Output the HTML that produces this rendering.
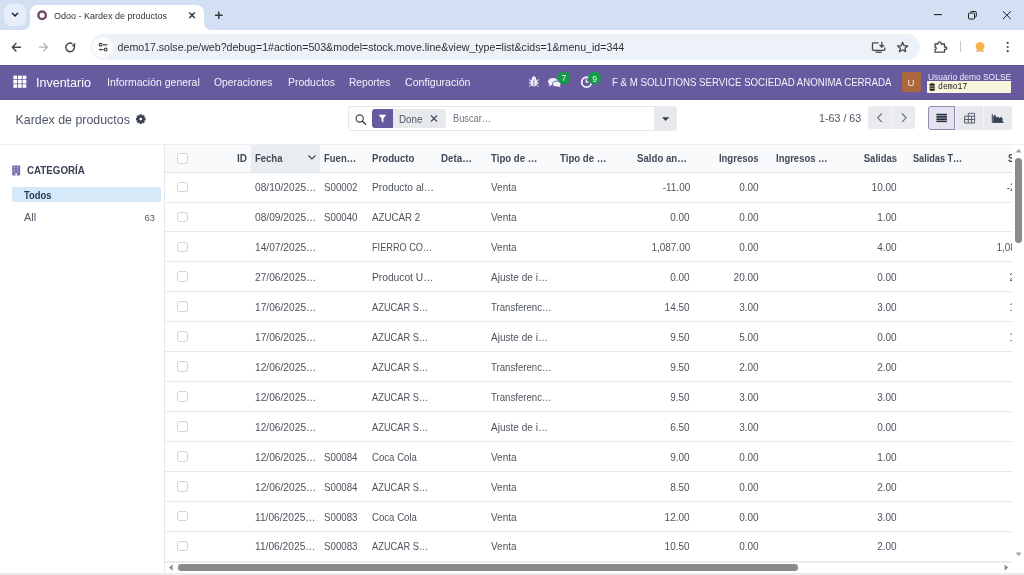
<!DOCTYPE html><html><head><meta charset="utf-8"><style>
*{box-sizing:border-box;margin:0;padding:0}
html,body{width:1024px;height:575px;overflow:hidden;background:#fff;font-family:"Liberation Sans",sans-serif;position:relative}
.a{position:absolute;white-space:nowrap}
#root{position:absolute;left:0;top:0;width:1024px;height:575px;overflow:hidden;will-change:transform}
.t{line-height:1}
svg{position:absolute;overflow:visible}
#tabstrip{left:0;top:0;width:1024px;height:30px;background:#d3e0f3}
#tabdd{left:4px;top:4px;width:22px;height:22px;border-radius:7px;background:#e7edf9}
#tab{left:30px;top:5px;width:174px;height:25px;background:#fff;border-radius:8px 8px 0 0}
#toolbar{left:0;top:29.6px;width:1024px;height:35.4px;background:#fff}
#omni{left:91px;top:34.3px;width:829px;height:25.4px;border-radius:12.7px;background:#edf1f8}
#siteinfo{left:92px;top:37px;width:20.5px;height:20.5px;border-radius:10.25px;background:#fbfcfe}
#navbar{left:0;top:65px;width:1024px;height:34.5px;background:#675a9f}
#cp{left:0;top:99.5px;width:1024px;height:45px;background:#fff;border-bottom:1px solid #eceef1}
#side{left:0;top:144px;width:165px;height:431px;background:#fff;border-right:1px solid #e4e6ea}
#list{left:165px;top:144px;width:847px;height:418px;overflow:hidden;background:#fff}
.nav{color:#fff;font-size:10.3px}
.hd{font-size:9.5px;font-weight:700;color:#424a57}
.cell{font-size:10px;color:#4e545d}
.chk{width:10.5px;height:10.5px;border:1px solid #d0d3d8;border-radius:2.5px;background:#fff}
</style></head><body><div id="root">
<div id="tabstrip" class="a"></div>
<div id="tabdd" class="a"></div>
<svg style="left:0;top:0" width="1" height="1"><path d="M12.3 13.2 L15 15.9 L17.7 13.2" fill="none" stroke="#1f2a44" stroke-width="1.5" stroke-linecap="round" stroke-linejoin="round"/></svg>
<div id="tab" class="a"></div>
<svg style="left:0;top:0" width="1" height="1"><path d="M22 30 Q30 30 30 22 L30 30 Z" fill="#fff"/><path d="M204 22 Q204 30 212 30 L204 30 Z" fill="#fff"/></svg>
<svg style="left:0;top:0" width="1" height="1"><circle cx="42.1" cy="15.3" r="3.75" fill="none" stroke="#6e4a66" stroke-width="2.4"/></svg>
<div class="a t " style="left:54.00px;top:11.16px;font-size:9.5px;color:#303030;transform:scaleX(0.946);transform-origin:left center">Odoo - Kardex de productos</div>
<svg style="left:0;top:0" width="1" height="1"><path d="M189.3 12.5 L194.8 18 M194.8 12.5 L189.3 18" stroke="#333" stroke-width="1.4"/></svg>
<svg style="left:0;top:0" width="1" height="1"><path d="M218.8 11.5 V19 M215 15.25 H222.6" stroke="#333" stroke-width="1.4"/></svg>
<svg style="left:0;top:0" width="1" height="1"><path d="M934 14.6 H942" stroke="#222" stroke-width="1.1"/><rect x="968.5" y="13" width="6" height="6" rx="1" fill="none" stroke="#222" stroke-width="1"/><path d="M970.5 13 V12.5 Q970.5 11.5 971.5 11.5 H975 Q976.3 11.5 976.3 12.8 V16 Q976.3 17 975.3 17 H974.5" fill="none" stroke="#222" stroke-width="1"/><path d="M1003 11.3 L1010.8 19 M1010.8 11.3 L1003 19" stroke="#222" stroke-width="1"/></svg>
<div id="toolbar" class="a"></div>
<svg style="left:0;top:0" width="1" height="1"><path d="M12.3 47.2 H21 M16.4 43 L12.3 47.2 L16.4 51.4" fill="none" stroke="#474747" stroke-width="1.4" stroke-linejoin="round"/><path d="M38.8 47.2 H47.4 M43.3 43 L47.4 47.2 L43.3 51.4" fill="none" stroke="#b4b4b4" stroke-width="1.3" stroke-linejoin="round"/><path d="M74.2 46 A4.3 4.3 0 1 1 72.5 43.8" fill="none" stroke="#474747" stroke-width="1.5"/><path d="M75.2 42.6 V46.3 H71.5 Z" fill="#474747"/></svg>
<div id="omni" class="a"></div>
<div id="siteinfo" class="a"></div>
<svg style="left:0;top:0" width="1" height="1"><circle cx="100.6" cy="44.8" r="1.4" fill="none" stroke="#474747" stroke-width="1.2"/><path d="M103 44.8 H107.3" stroke="#474747" stroke-width="1.3"/><circle cx="105.6" cy="49.6" r="1.4" fill="none" stroke="#474747" stroke-width="1.2"/><path d="M99 49.6 H103.3" stroke="#474747" stroke-width="1.3"/></svg>
<div class="a t " style="left:117.60px;top:42.33px;font-size:10.6px;color:#303134;letter-spacing:0px">demo17.solse.pe/web?debug=1#action=503&amp;model=stock.move.line&amp;view_type=list&amp;cids=1&amp;menu_id=344</div>
<svg style="left:0;top:0" width="1" height="1"><path d="M878.5 42.8 H873.3 Q872.5 42.8 872.5 43.6 V49.6 Q872.5 50.4 873.3 50.4 H884 Q884.8 50.4 884.8 49.6 V47.5" fill="none" stroke="#474747" stroke-width="1.3"/><path d="M875.5 52.2 H881.8" stroke="#474747" stroke-width="1.3"/><path d="M881.8 42 V47 M879.6 45 L881.8 47.2 L884 45" fill="none" stroke="#474747" stroke-width="1.3"/><path d="M902.6 42.3 L904 45.6 L907.6 45.9 L904.9 48.2 L905.7 51.7 L902.6 49.8 L899.5 51.7 L900.3 48.2 L897.6 45.9 L901.2 45.6 Z" fill="none" stroke="#474747" stroke-width="1.3" stroke-linejoin="round"/><path d="M935 44 H938 V43 Q938 41.8 939.5 41.8 Q941 41.8 941 43 V44 H944.5 V47 H945.5 Q946.8 47 946.8 48.2 Q946.8 49.4 945.5 49.4 H944.5 V52.2 H935 V49.5 Q936.3 49.3 936.3 48.2 Q936.3 47.1 935 47 Z" fill="none" stroke="#474747" stroke-width="1.3" stroke-linejoin="round"/><path d="M960.5 41 V52" stroke="#c7c7c7" stroke-width="1"/><circle cx="980.1" cy="46.3" r="4.4" fill="#f6b34a"/><path d="M976 51 H984.2" stroke="#d89a3c" stroke-width="1"/><circle cx="1007.7" cy="42.8" r="1.1" fill="#474747"/><circle cx="1007.7" cy="47" r="1.1" fill="#474747"/><circle cx="1007.7" cy="51.2" r="1.1" fill="#474747"/></svg>
<div id="navbar" class="a"></div>
<div class="a" style="left:0;top:65px;width:1024px;height:1px;background:#5f5394"></div>
<div class="a" style="left:0;top:98.3px;width:1024px;height:1.2px;background:#5f5394"></div>
<svg style="left:0;top:0" width="1" height="1"><rect x="13.40" y="75.60" width="3.7" height="3.6" fill="#fff"/><rect x="18.00" y="75.60" width="3.7" height="3.6" fill="#fff"/><rect x="22.60" y="75.60" width="3.7" height="3.6" fill="#fff"/><rect x="13.40" y="79.90" width="3.7" height="3.6" fill="#fff"/><rect x="18.00" y="79.90" width="3.7" height="3.6" fill="#fff"/><rect x="22.60" y="79.90" width="3.7" height="3.6" fill="#fff"/><rect x="13.40" y="84.20" width="3.7" height="3.6" fill="#fff"/><rect x="18.00" y="84.20" width="3.7" height="3.6" fill="#fff"/><rect x="22.60" y="84.20" width="3.7" height="3.6" fill="#fff"/></svg>
<div class="a t nav" style="left:36.00px;top:76.72px;font-size:12.5px;color:#fff">Inventario</div>
<div class="a t nav" style="left:106.60px;top:77.36px;font-size:10.8px;color:#f4f2fa;transform:scaleX(0.972);transform-origin:left center">Información general</div>
<div class="a t nav" style="left:214.20px;top:77.36px;font-size:10.8px;color:#f4f2fa;transform:scaleX(0.956);transform-origin:left center">Operaciones</div>
<div class="a t nav" style="left:287.50px;top:77.36px;font-size:10.8px;color:#f4f2fa;transform:scaleX(0.969);transform-origin:left center">Productos</div>
<div class="a t nav" style="left:349.00px;top:77.36px;font-size:10.8px;color:#f4f2fa;transform:scaleX(0.942);transform-origin:left center">Reportes</div>
<div class="a t nav" style="left:404.50px;top:77.36px;font-size:10.8px;color:#f4f2fa;transform:scaleX(0.982);transform-origin:left center">Configuración</div>
<svg style="left:0;top:0" width="1" height="1"><ellipse cx="533.9" cy="82.5" rx="3.3" ry="4" fill="#f0eef8"/><circle cx="533.9" cy="78.3" r="2" fill="#f0eef8"/><path d="M529 79.5 L531 80.8 M538.8 79.5 L536.8 80.8 M528.8 83 H531 M539 83 H536.8 M529.2 86.5 L531 85 M538.6 86.5 L536.8 85" stroke="#f0eef8" stroke-width="1"/><path d="M533.9 79.5 V86.3" stroke="#675a9f" stroke-width="0.8"/></svg>
<svg style="left:0;top:0" width="1" height="1"><ellipse cx="553" cy="81.6" rx="5" ry="3.6" fill="#f0eef8"/><path d="M549.5 84 L548.6 86.5 L552.5 84.8 Z" fill="#f0eef8"/><ellipse cx="556.8" cy="84" rx="4.2" ry="2.9" fill="#f0eef8" stroke="#675a9f" stroke-width="0.9"/><path d="M559.5 86 L561 87.5 L557.5 86.6 Z" fill="#f0eef8"/><circle cx="563.9" cy="77.9" r="6.4" fill="#16994a"/><circle cx="586.6" cy="82.2" r="4.9" fill="none" stroke="#f0eef8" stroke-width="1.9"/><path d="M586.3 79.3 V82.2 H588.6" fill="none" stroke="#f0eef8" stroke-width="1.3"/><circle cx="594.6" cy="78" r="6.5" fill="#16994a"/></svg>
<div class="a t " style="left:561.60px;top:74.32px;font-size:8.6px;color:#e8f5ec">7</div>
<div class="a t " style="left:592.20px;top:74.52px;font-size:8.6px;color:#e8f5ec">9</div>
<div class="a t " style="left:612.30px;top:77.58px;font-size:10.3px;color:#f4f2fa;transform:scaleX(0.94);transform-origin:left center">F &amp; M SOLUTIONS SERVICE SOCIEDAD ANONIMA CERRADA</div>
<div class="a" style="left:902px;top:72.3px;width:18.6px;height:19.4px;background:#ad673c;border-radius:2px"></div>
<div class="a t " style="left:907.60px;top:77.67px;font-size:9.6px;color:#f3e6dc">U</div>
<div class="a t " style="left:927.50px;top:71.96px;font-size:9.5px;color:#efeaff;text-decoration:underline;text-decoration-thickness:0.7px;text-underline-offset:1px;transform:scaleX(0.89);transform-origin:left center">Usuario demo SOLSE</div>
<div class="a" style="left:927.2px;top:81.3px;width:83.5px;height:11.3px;background:#f8f6dc"></div>
<svg style="left:0;top:0" width="1" height="1"><path d="M929.6 84.2 Q929.6 83.2 932.2 83.2 Q934.8 83.2 934.8 84.2 V89.9 Q934.8 90.9 932.2 90.9 Q929.6 90.9 929.6 89.9 Z" fill="#2b2b2b"/><path d="M929.6 85.8 Q932.2 86.8 934.8 85.8 M929.6 88 Q932.2 89 934.8 88" fill="none" stroke="#f8f6dc" stroke-width="0.6"/></svg>
<div class="a t " style="left:938.00px;top:82.07px;font-size:9.6px;font-family:'Liberation Mono';color:#1a1a1a;font-weight:400;transform:scaleX(0.85);transform-origin:left center">demo17</div>
<div id="cp" class="a"></div>
<div class="a t " style="left:15.50px;top:113.90px;font-size:12.4px;color:#4b5563">Kardex de productos</div>
<svg style="left:0;top:0" width="1" height="1"><g transform="translate(140.8,119.1)"><rect x="-1.3" y="-4.8" width="2.6" height="2.6" fill="#374151" transform="rotate(0)"/><rect x="-1.3" y="-4.8" width="2.6" height="2.6" fill="#374151" transform="rotate(45)"/><rect x="-1.3" y="-4.8" width="2.6" height="2.6" fill="#374151" transform="rotate(90)"/><rect x="-1.3" y="-4.8" width="2.6" height="2.6" fill="#374151" transform="rotate(135)"/><rect x="-1.3" y="-4.8" width="2.6" height="2.6" fill="#374151" transform="rotate(180)"/><rect x="-1.3" y="-4.8" width="2.6" height="2.6" fill="#374151" transform="rotate(225)"/><rect x="-1.3" y="-4.8" width="2.6" height="2.6" fill="#374151" transform="rotate(270)"/><rect x="-1.3" y="-4.8" width="2.6" height="2.6" fill="#374151" transform="rotate(315)"/><circle r="3.3" fill="#374151"/><circle r="1.4" fill="#fff"/></g></svg>
<div class="a" style="left:348px;top:106.2px;width:329px;height:25.2px;border:1px solid #e4e6ea;border-radius:3px;background:#fff"></div>
<div class="a" style="left:654.2px;top:106.2px;width:22.8px;height:25.2px;background:#e7e9ed;border-radius:0 3px 3px 0"></div>
<svg style="left:0;top:0" width="1" height="1"><path d="M662 117.2 H669.3 L665.65 121 Z" fill="#374151"/><circle cx="359.7" cy="118.5" r="3.6" fill="none" stroke="#3d4552" stroke-width="1.2"/><path d="M362.4 121.2 L365.6 124.2" stroke="#3d4552" stroke-width="1.4" stroke-linecap="round"/></svg>
<div class="a" style="left:372.2px;top:109.3px;width:73.6px;height:18.5px;background:#e7e9ed;border-radius:3px"></div>
<div class="a" style="left:372.2px;top:109.3px;width:20.5px;height:18.5px;background:#675a9f;border-radius:3px 0 0 3px"></div>
<svg style="left:0;top:0" width="1" height="1"><path d="M378.7 114.8 H386.3 L383.4 118.6 V122.6 L381.6 121.4 V118.6 Z" fill="#fff"/></svg>
<div class="a t " style="left:399.20px;top:114.87px;font-size:10.2px;color:#4b5563;transform:scaleX(0.957);transform-origin:left center">Done</div>
<svg style="left:0;top:0" width="1" height="1"><path d="M431 115.5 L437 121.5 M437 115.5 L431 121.5" stroke="#4b5563" stroke-width="1.4"/></svg>
<div class="a t " style="left:452.50px;top:114.40px;font-size:10.4px;color:#6b7280;transform:scaleX(0.89);transform-origin:left center">Buscar…</div>
<div class="a t " style="left:819.40px;top:114.20px;font-size:10.4px;color:#4b5563;transform:scaleX(1.03);transform-origin:left center">1-63 / 63</div>
<div class="a" style="left:868.1px;top:106.3px;width:47.4px;height:23px;background:#e9ebee;border-radius:3px"></div>
<div class="a" style="left:891.3px;top:106.3px;width:0.8px;height:23px;background:#f2f3f5"></div>
<svg style="left:0;top:0" width="1" height="1"><path d="M881.8 113.5 L877.7 117.8 L881.8 122.1" fill="none" stroke="#6b7280" stroke-width="1.2"/><path d="M902 113.5 L906.1 117.8 L902 122.1" fill="none" stroke="#6b7280" stroke-width="1.2"/></svg>
<div class="a" style="left:928px;top:106.2px;width:83.7px;height:23.6px;background:#e7e9ed;border-radius:3px"></div>
<div class="a" style="left:928px;top:106.2px;width:26.6px;height:23.6px;background:#e5e2f0;border:1px solid #9189ad;border-radius:3px 0 0 3px"></div>
<div class="a" style="left:954.6px;top:106.2px;width:0.8px;height:23.6px;background:#f3f4f6"></div>
<div class="a" style="left:983px;top:106.2px;width:0.8px;height:23.6px;background:#f3f4f6"></div>
<svg style="left:0;top:0" width="1" height="1"><rect x="936.4" y="113.8" width="10.5" height="1.6" fill="#1f2937"/><rect x="936.4" y="116.1" width="10.5" height="1.6" fill="#1f2937"/><rect x="936.4" y="118.4" width="10.5" height="1.6" fill="#1f2937"/><rect x="936.4" y="120.6" width="10.5" height="1.5" fill="#1f2937"/><path d="M968.3 113.3 H974.6 V123 H964.6 V116.2 H974.6 M964.6 119.5 H974.6 M968.3 113.3 V123 M971.5 116.2 V123" fill="none" stroke="#4b5563" stroke-width="0.9"/><path d="M992.3 114 V122.4 H1003.8" fill="none" stroke="#374151" stroke-width="1"/><path d="M993.2 122 V116.5 L995 114.6 L996.8 117.8 L998.3 116.4 L999.6 118.2 L1001 116.8 L1002.6 118.6 V122 Z" fill="#374151"/></svg>
<div id="side" class="a"></div>
<svg style="left:0;top:0" width="1" height="1"><rect x="12.2" y="165.4" width="8" height="10" rx="0.8" fill="#7c6fb0"/><path d="M14.2 167.5 H14.9 M17.5 167.5 H18.2 M14.2 169.6 H14.9 M17.5 169.6 H18.2 M14.2 171.7 H14.9 M17.5 171.7 H18.2" stroke="#fff" stroke-width="1"/><rect x="15.3" y="173.3" width="1.8" height="2.1" fill="#fff"/></svg>
<div class="a t " style="left:27.20px;top:166.20px;font-size:10.4px;color:#374151;font-weight:700;transform:scaleX(0.938);transform-origin:left center">CATEGORÍA</div>
<div class="a" style="left:12px;top:187.1px;width:149px;height:15.3px;background:#d6e9f8"></div>
<div class="a t " style="left:24.00px;top:191.27px;font-size:10.2px;color:#1f3a52;font-weight:700;transform:scaleX(0.927);transform-origin:left center">Todos</div>
<div class="a t " style="left:24.00px;top:213.00px;font-size:10.4px;color:#4b5563;transform:scaleX(1.05);transform-origin:left center">All</div>
<div class="a t " style="right:869.00px;top:213.67px;font-size:8.9px;color:#4b5563;transform:scaleX(1.04);transform-origin:right center">63</div>
<div id="list" class="a"><div class="a" style="left:0;top:0;width:847px;height:28.7px;background:#f8fafb;border-bottom:1px solid #dee2e6"></div><div class="a" style="left:85.8px;top:0;width:69px;height:27.7px;background:#eaedf0"></div><div class="a chk" style="left:12px;top:9.199999999999989px"></div><div class="a t hd" style="right:765.00px;top:10.44px;font-size:10px;">ID</div><div class="a t hd" style="left:90.00px;top:10.44px;font-size:10px;;transform:scaleX(0.95);transform-origin:left center">Fecha</div><svg style="left:0;top:0" width="1" height="1"><path d="M143.4 11.5 L146.9 14.9 L150.4 11.5" fill="none" stroke="#374151" stroke-width="1.1"/></svg><div class="a t hd" style="left:159.00px;top:10.44px;font-size:10px;;transform:scaleX(0.95);transform-origin:left center">Fuen…</div><div class="a t hd" style="left:207.10px;top:10.44px;font-size:10px;;transform:scaleX(0.968);transform-origin:left center">Producto</div><div class="a t hd" style="left:276.00px;top:10.44px;font-size:10px;;transform:scaleX(0.977);transform-origin:left center">Deta…</div><div class="a t hd" style="left:325.50px;top:10.44px;font-size:10px;;transform:scaleX(0.965);transform-origin:left center">Tipo de …</div><div class="a t hd" style="left:395.00px;top:10.44px;font-size:10px;;transform:scaleX(0.965);transform-origin:left center">Tipo de …</div><div class="a t hd" style="left:472.30px;top:10.44px;font-size:10px;;transform:scaleX(0.965);transform-origin:left center">Saldo an…</div><div class="a t hd" style="right:253.30px;top:10.44px;font-size:10px;;transform:scaleX(0.955);transform-origin:right center">Ingresos</div><div class="a t hd" style="left:610.50px;top:10.44px;font-size:10px;;transform:scaleX(0.946);transform-origin:left center">Ingresos …</div><div class="a t hd" style="right:115.00px;top:10.44px;font-size:10px;;transform:scaleX(0.949);transform-origin:right center">Salidas</div><div class="a t hd" style="left:748.20px;top:10.44px;font-size:10px;;transform:scaleX(0.913);transform-origin:left center">Salidas T…</div><div class="a t hd" style="left:843.00px;top:10.44px;font-size:10px;;transform:scaleX(0.95);transform-origin:left center">Saldo</div><div class="a" style="left:0;top:57.53px;width:847px;height:1px;background:#e8eaed"></div><div class="a chk" style="left:12px;top:37.70px"></div><div class="a t cell" style="left:90.00px;top:38.33px;font-size:10.6px;;transform:scaleX(0.963);transform-origin:left center">08/10/2025…</div><div class="a t cell" style="left:159.00px;top:38.33px;font-size:10.6px;;transform:scaleX(0.917);transform-origin:left center">S00002</div><div class="a t cell" style="left:207.10px;top:38.33px;font-size:10.6px;;transform:scaleX(0.968);transform-origin:left center">Producto al…</div><div class="a t cell" style="left:325.50px;top:38.33px;font-size:10.6px;;transform:scaleX(0.941);transform-origin:left center">Venta</div><div class="a t cell" style="right:322.00px;top:38.33px;font-size:10.6px;;transform:scaleX(0.94);transform-origin:right center">-11.00</div><div class="a t cell" style="right:253.30px;top:38.33px;font-size:10.6px;;transform:scaleX(0.94);transform-origin:right center">0.00</div><div class="a t cell" style="right:115.00px;top:38.33px;font-size:10.6px;;transform:scaleX(0.94);transform-origin:right center">10.00</div><div class="a t cell" style="right:-23.00px;top:38.33px;font-size:10.6px;;transform:scaleX(0.94);transform-origin:right center">-21.00</div><div class="a" style="left:0;top:87.46px;width:847px;height:1px;background:#e8eaed"></div><div class="a chk" style="left:12px;top:67.63px"></div><div class="a t cell" style="left:90.00px;top:68.26px;font-size:10.6px;;transform:scaleX(0.963);transform-origin:left center">08/09/2025…</div><div class="a t cell" style="left:159.00px;top:68.26px;font-size:10.6px;;transform:scaleX(0.917);transform-origin:left center">S00040</div><div class="a t cell" style="left:207.10px;top:68.26px;font-size:10.6px;;transform:scaleX(0.921);transform-origin:left center">AZUCAR 2</div><div class="a t cell" style="left:325.50px;top:68.26px;font-size:10.6px;;transform:scaleX(0.941);transform-origin:left center">Venta</div><div class="a t cell" style="right:322.00px;top:68.26px;font-size:10.6px;;transform:scaleX(0.94);transform-origin:right center">0.00</div><div class="a t cell" style="right:253.30px;top:68.26px;font-size:10.6px;;transform:scaleX(0.94);transform-origin:right center">0.00</div><div class="a t cell" style="right:115.00px;top:68.26px;font-size:10.6px;;transform:scaleX(0.94);transform-origin:right center">1.00</div><div class="a t cell" style="right:-23.00px;top:68.26px;font-size:10.6px;;transform:scaleX(0.94);transform-origin:right center">-1.00</div><div class="a" style="left:0;top:117.39px;width:847px;height:1px;background:#e8eaed"></div><div class="a chk" style="left:12px;top:97.56px"></div><div class="a t cell" style="left:90.00px;top:98.19px;font-size:10.6px;;transform:scaleX(0.963);transform-origin:left center">14/07/2025…</div><div class="a t cell" style="left:207.10px;top:98.19px;font-size:10.6px;;transform:scaleX(0.866);transform-origin:left center">FIERRO CO…</div><div class="a t cell" style="left:325.50px;top:98.19px;font-size:10.6px;;transform:scaleX(0.941);transform-origin:left center">Venta</div><div class="a t cell" style="right:322.00px;top:98.19px;font-size:10.6px;;transform:scaleX(0.94);transform-origin:right center">1,087.00</div><div class="a t cell" style="right:253.30px;top:98.19px;font-size:10.6px;;transform:scaleX(0.94);transform-origin:right center">0.00</div><div class="a t cell" style="right:115.00px;top:98.19px;font-size:10.6px;;transform:scaleX(0.94);transform-origin:right center">4.00</div><div class="a t cell" style="right:-23.00px;top:98.19px;font-size:10.6px;;transform:scaleX(0.94);transform-origin:right center">1,083.00</div><div class="a" style="left:0;top:147.32px;width:847px;height:1px;background:#e8eaed"></div><div class="a chk" style="left:12px;top:127.49px"></div><div class="a t cell" style="left:90.00px;top:128.12px;font-size:10.6px;;transform:scaleX(0.963);transform-origin:left center">27/06/2025…</div><div class="a t cell" style="left:207.10px;top:128.12px;font-size:10.6px;;transform:scaleX(0.966);transform-origin:left center">Producot U…</div><div class="a t cell" style="left:325.50px;top:128.12px;font-size:10.6px;;transform:scaleX(0.949);transform-origin:left center">Ajuste de i…</div><div class="a t cell" style="right:322.00px;top:128.12px;font-size:10.6px;;transform:scaleX(0.94);transform-origin:right center">0.00</div><div class="a t cell" style="right:253.30px;top:128.12px;font-size:10.6px;;transform:scaleX(0.94);transform-origin:right center">20.00</div><div class="a t cell" style="right:115.00px;top:128.12px;font-size:10.6px;;transform:scaleX(0.94);transform-origin:right center">0.00</div><div class="a t cell" style="right:-23.00px;top:128.12px;font-size:10.6px;;transform:scaleX(0.94);transform-origin:right center">20.00</div><div class="a" style="left:0;top:177.25px;width:847px;height:1px;background:#e8eaed"></div><div class="a chk" style="left:12px;top:157.42px"></div><div class="a t cell" style="left:90.00px;top:158.05px;font-size:10.6px;;transform:scaleX(0.963);transform-origin:left center">17/06/2025…</div><div class="a t cell" style="left:207.10px;top:158.05px;font-size:10.6px;;transform:scaleX(0.879);transform-origin:left center">AZUCAR S…</div><div class="a t cell" style="left:325.50px;top:158.05px;font-size:10.6px;;transform:scaleX(0.908);transform-origin:left center">Transferenc…</div><div class="a t cell" style="right:322.00px;top:158.05px;font-size:10.6px;;transform:scaleX(0.94);transform-origin:right center">14.50</div><div class="a t cell" style="right:253.30px;top:158.05px;font-size:10.6px;;transform:scaleX(0.94);transform-origin:right center">3.00</div><div class="a t cell" style="right:115.00px;top:158.05px;font-size:10.6px;;transform:scaleX(0.94);transform-origin:right center">3.00</div><div class="a t cell" style="right:-23.00px;top:158.05px;font-size:10.6px;;transform:scaleX(0.94);transform-origin:right center">14.50</div><div class="a" style="left:0;top:207.18px;width:847px;height:1px;background:#e8eaed"></div><div class="a chk" style="left:12px;top:187.35px"></div><div class="a t cell" style="left:90.00px;top:187.98px;font-size:10.6px;;transform:scaleX(0.963);transform-origin:left center">17/06/2025…</div><div class="a t cell" style="left:207.10px;top:187.98px;font-size:10.6px;;transform:scaleX(0.879);transform-origin:left center">AZUCAR S…</div><div class="a t cell" style="left:325.50px;top:187.98px;font-size:10.6px;;transform:scaleX(0.949);transform-origin:left center">Ajuste de i…</div><div class="a t cell" style="right:322.00px;top:187.98px;font-size:10.6px;;transform:scaleX(0.94);transform-origin:right center">9.50</div><div class="a t cell" style="right:253.30px;top:187.98px;font-size:10.6px;;transform:scaleX(0.94);transform-origin:right center">5.00</div><div class="a t cell" style="right:115.00px;top:187.98px;font-size:10.6px;;transform:scaleX(0.94);transform-origin:right center">0.00</div><div class="a t cell" style="right:-23.00px;top:187.98px;font-size:10.6px;;transform:scaleX(0.94);transform-origin:right center">14.50</div><div class="a" style="left:0;top:237.11px;width:847px;height:1px;background:#e8eaed"></div><div class="a chk" style="left:12px;top:217.28px"></div><div class="a t cell" style="left:90.00px;top:217.91px;font-size:10.6px;;transform:scaleX(0.963);transform-origin:left center">12/06/2025…</div><div class="a t cell" style="left:207.10px;top:217.91px;font-size:10.6px;;transform:scaleX(0.879);transform-origin:left center">AZUCAR S…</div><div class="a t cell" style="left:325.50px;top:217.91px;font-size:10.6px;;transform:scaleX(0.908);transform-origin:left center">Transferenc…</div><div class="a t cell" style="right:322.00px;top:217.91px;font-size:10.6px;;transform:scaleX(0.94);transform-origin:right center">9.50</div><div class="a t cell" style="right:253.30px;top:217.91px;font-size:10.6px;;transform:scaleX(0.94);transform-origin:right center">2.00</div><div class="a t cell" style="right:115.00px;top:217.91px;font-size:10.6px;;transform:scaleX(0.94);transform-origin:right center">2.00</div><div class="a t cell" style="right:-23.00px;top:217.91px;font-size:10.6px;;transform:scaleX(0.94);transform-origin:right center">9.50</div><div class="a" style="left:0;top:267.04px;width:847px;height:1px;background:#e8eaed"></div><div class="a chk" style="left:12px;top:247.21px"></div><div class="a t cell" style="left:90.00px;top:247.84px;font-size:10.6px;;transform:scaleX(0.963);transform-origin:left center">12/06/2025…</div><div class="a t cell" style="left:207.10px;top:247.84px;font-size:10.6px;;transform:scaleX(0.879);transform-origin:left center">AZUCAR S…</div><div class="a t cell" style="left:325.50px;top:247.84px;font-size:10.6px;;transform:scaleX(0.908);transform-origin:left center">Transferenc…</div><div class="a t cell" style="right:322.00px;top:247.84px;font-size:10.6px;;transform:scaleX(0.94);transform-origin:right center">9.50</div><div class="a t cell" style="right:253.30px;top:247.84px;font-size:10.6px;;transform:scaleX(0.94);transform-origin:right center">3.00</div><div class="a t cell" style="right:115.00px;top:247.84px;font-size:10.6px;;transform:scaleX(0.94);transform-origin:right center">3.00</div><div class="a t cell" style="right:-23.00px;top:247.84px;font-size:10.6px;;transform:scaleX(0.94);transform-origin:right center">9.50</div><div class="a" style="left:0;top:296.97px;width:847px;height:1px;background:#e8eaed"></div><div class="a chk" style="left:12px;top:277.14px"></div><div class="a t cell" style="left:90.00px;top:277.77px;font-size:10.6px;;transform:scaleX(0.963);transform-origin:left center">12/06/2025…</div><div class="a t cell" style="left:207.10px;top:277.77px;font-size:10.6px;;transform:scaleX(0.879);transform-origin:left center">AZUCAR S…</div><div class="a t cell" style="left:325.50px;top:277.77px;font-size:10.6px;;transform:scaleX(0.949);transform-origin:left center">Ajuste de i…</div><div class="a t cell" style="right:322.00px;top:277.77px;font-size:10.6px;;transform:scaleX(0.94);transform-origin:right center">6.50</div><div class="a t cell" style="right:253.30px;top:277.77px;font-size:10.6px;;transform:scaleX(0.94);transform-origin:right center">3.00</div><div class="a t cell" style="right:115.00px;top:277.77px;font-size:10.6px;;transform:scaleX(0.94);transform-origin:right center">0.00</div><div class="a t cell" style="right:-23.00px;top:277.77px;font-size:10.6px;;transform:scaleX(0.94);transform-origin:right center">9.50</div><div class="a" style="left:0;top:326.90px;width:847px;height:1px;background:#e8eaed"></div><div class="a chk" style="left:12px;top:307.07px"></div><div class="a t cell" style="left:90.00px;top:307.70px;font-size:10.6px;;transform:scaleX(0.963);transform-origin:left center">12/06/2025…</div><div class="a t cell" style="left:159.00px;top:307.70px;font-size:10.6px;;transform:scaleX(0.917);transform-origin:left center">S00084</div><div class="a t cell" style="left:207.10px;top:307.70px;font-size:10.6px;;transform:scaleX(0.908);transform-origin:left center">Coca Cola</div><div class="a t cell" style="left:325.50px;top:307.70px;font-size:10.6px;;transform:scaleX(0.941);transform-origin:left center">Venta</div><div class="a t cell" style="right:322.00px;top:307.70px;font-size:10.6px;;transform:scaleX(0.94);transform-origin:right center">9.00</div><div class="a t cell" style="right:253.30px;top:307.70px;font-size:10.6px;;transform:scaleX(0.94);transform-origin:right center">0.00</div><div class="a t cell" style="right:115.00px;top:307.70px;font-size:10.6px;;transform:scaleX(0.94);transform-origin:right center">1.00</div><div class="a t cell" style="right:-23.00px;top:307.70px;font-size:10.6px;;transform:scaleX(0.94);transform-origin:right center">8.00</div><div class="a" style="left:0;top:356.83px;width:847px;height:1px;background:#e8eaed"></div><div class="a chk" style="left:12px;top:337.00px"></div><div class="a t cell" style="left:90.00px;top:337.63px;font-size:10.6px;;transform:scaleX(0.963);transform-origin:left center">12/06/2025…</div><div class="a t cell" style="left:159.00px;top:337.63px;font-size:10.6px;;transform:scaleX(0.917);transform-origin:left center">S00084</div><div class="a t cell" style="left:207.10px;top:337.63px;font-size:10.6px;;transform:scaleX(0.879);transform-origin:left center">AZUCAR S…</div><div class="a t cell" style="left:325.50px;top:337.63px;font-size:10.6px;;transform:scaleX(0.941);transform-origin:left center">Venta</div><div class="a t cell" style="right:322.00px;top:337.63px;font-size:10.6px;;transform:scaleX(0.94);transform-origin:right center">8.50</div><div class="a t cell" style="right:253.30px;top:337.63px;font-size:10.6px;;transform:scaleX(0.94);transform-origin:right center">0.00</div><div class="a t cell" style="right:115.00px;top:337.63px;font-size:10.6px;;transform:scaleX(0.94);transform-origin:right center">2.00</div><div class="a t cell" style="right:-23.00px;top:337.63px;font-size:10.6px;;transform:scaleX(0.94);transform-origin:right center">6.50</div><div class="a" style="left:0;top:386.76px;width:847px;height:1px;background:#e8eaed"></div><div class="a chk" style="left:12px;top:366.93px"></div><div class="a t cell" style="left:90.00px;top:367.56px;font-size:10.6px;;transform:scaleX(0.963);transform-origin:left center">11/06/2025…</div><div class="a t cell" style="left:159.00px;top:367.56px;font-size:10.6px;;transform:scaleX(0.917);transform-origin:left center">S00083</div><div class="a t cell" style="left:207.10px;top:367.56px;font-size:10.6px;;transform:scaleX(0.908);transform-origin:left center">Coca Cola</div><div class="a t cell" style="left:325.50px;top:367.56px;font-size:10.6px;;transform:scaleX(0.941);transform-origin:left center">Venta</div><div class="a t cell" style="right:322.00px;top:367.56px;font-size:10.6px;;transform:scaleX(0.94);transform-origin:right center">12.00</div><div class="a t cell" style="right:253.30px;top:367.56px;font-size:10.6px;;transform:scaleX(0.94);transform-origin:right center">0.00</div><div class="a t cell" style="right:115.00px;top:367.56px;font-size:10.6px;;transform:scaleX(0.94);transform-origin:right center">3.00</div><div class="a t cell" style="right:-23.00px;top:367.56px;font-size:10.6px;;transform:scaleX(0.94);transform-origin:right center">9.00</div><div class="a" style="left:0;top:416.69px;width:847px;height:1px;background:#e8eaed"></div><div class="a chk" style="left:12px;top:396.86px"></div><div class="a t cell" style="left:90.00px;top:397.49px;font-size:10.6px;;transform:scaleX(0.963);transform-origin:left center">11/06/2025…</div><div class="a t cell" style="left:159.00px;top:397.49px;font-size:10.6px;;transform:scaleX(0.917);transform-origin:left center">S00083</div><div class="a t cell" style="left:207.10px;top:397.49px;font-size:10.6px;;transform:scaleX(0.879);transform-origin:left center">AZUCAR S…</div><div class="a t cell" style="left:325.50px;top:397.49px;font-size:10.6px;;transform:scaleX(0.941);transform-origin:left center">Venta</div><div class="a t cell" style="right:322.00px;top:397.49px;font-size:10.6px;;transform:scaleX(0.94);transform-origin:right center">10.50</div><div class="a t cell" style="right:253.30px;top:397.49px;font-size:10.6px;;transform:scaleX(0.94);transform-origin:right center">0.00</div><div class="a t cell" style="right:115.00px;top:397.49px;font-size:10.6px;;transform:scaleX(0.94);transform-origin:right center">2.00</div><div class="a t cell" style="right:-23.00px;top:397.49px;font-size:10.6px;;transform:scaleX(0.94);transform-origin:right center">8.50</div></div>
<div class="a" style="left:164px;top:144px;width:1px;height:431px;background:#e6e8eb"></div>
<div class="a" style="left:1012px;top:144px;width:12px;height:429px;background:#fff"></div>
<svg style="left:0;top:0" width="1" height="1"><path d="M1015.6 152.5 L1018.6 148.8 L1021.6 152.5 Z" fill="#a3a3a3"/><path d="M1015.6 552.6 L1018.6 556.2 L1021.6 552.6 Z" fill="#a3a3a3"/></svg>
<div class="a" style="left:1015px;top:157.7px;width:7px;height:85.3px;background:#8a8a8a;border-radius:3.5px"></div>
<div class="a" style="left:165px;top:562px;width:847px;height:11px;background:#fff;border-top:1px solid #eceef0"></div>
<svg style="left:0;top:0" width="1" height="1"><path d="M172.6 564.5 L169 567.6 L172.6 570.7 Z" fill="#8a8a8a"/><path d="M1004.6 564.5 L1008.2 567.6 L1004.6 570.7 Z" fill="#8a8a8a"/></svg>
<div class="a" style="left:178.3px;top:564.4px;width:620px;height:6.4px;background:#8a8a8a;border-radius:3.2px"></div>
<div class="a" style="left:0;top:143.5px;width:1024px;height:1px;background:#eceef1"></div>
<div class="a" style="left:0;top:572.7px;width:1024px;height:2.3px;background:#eaebee"></div>
</div></body></html>
